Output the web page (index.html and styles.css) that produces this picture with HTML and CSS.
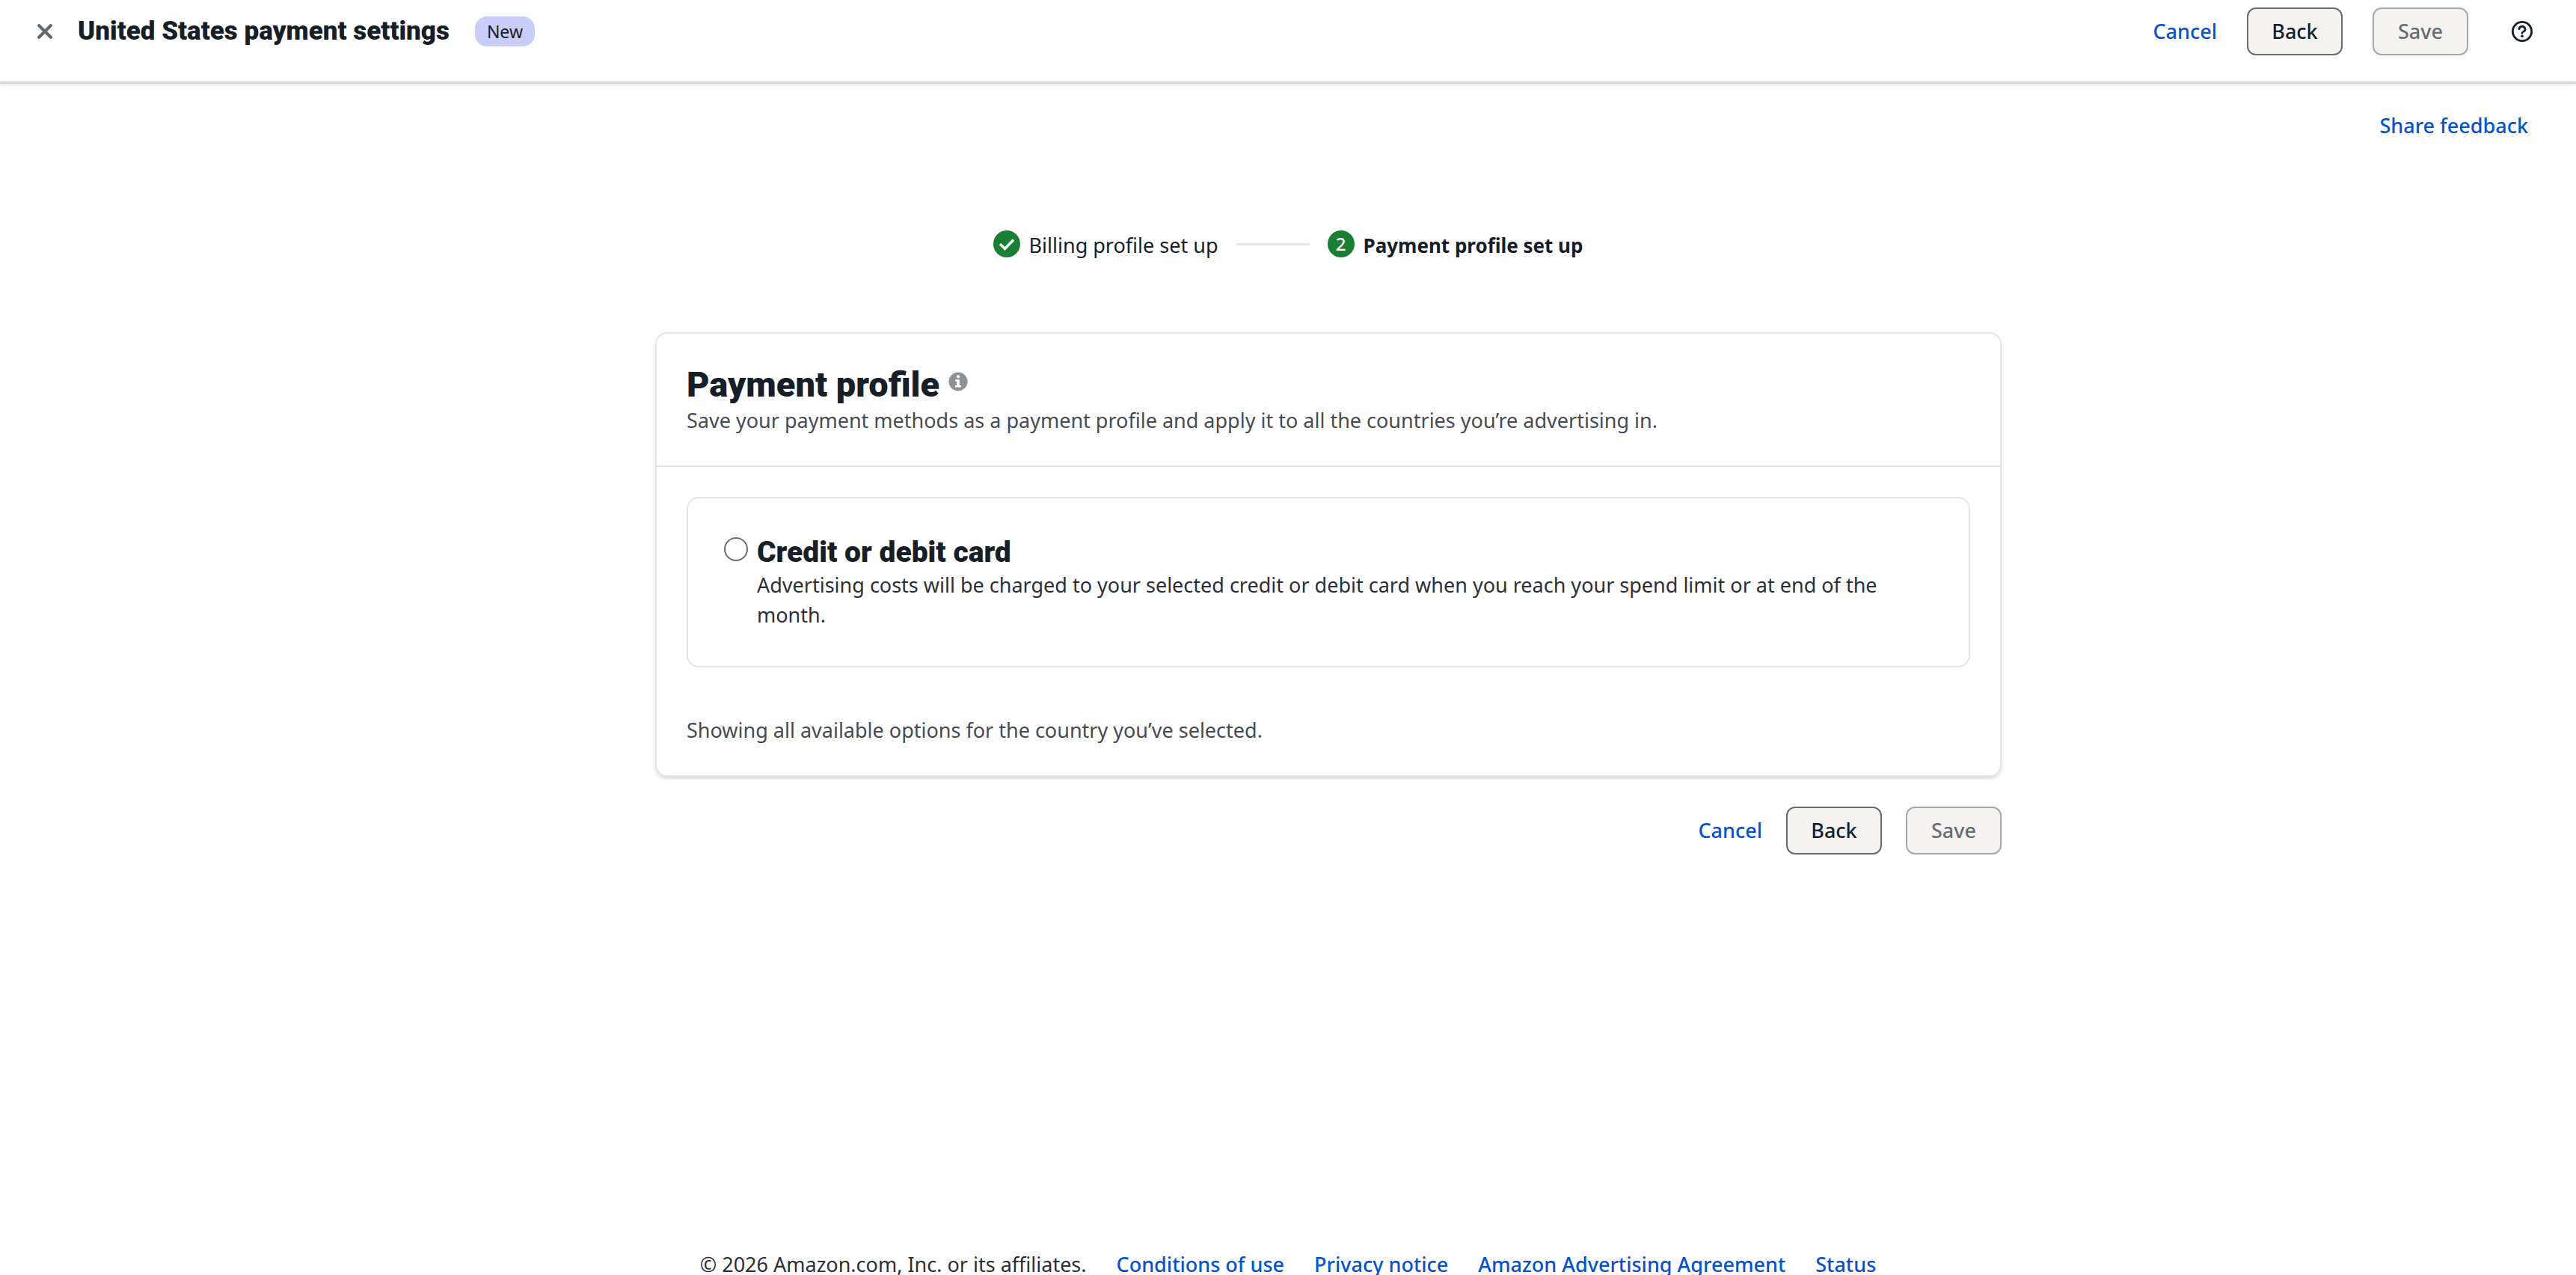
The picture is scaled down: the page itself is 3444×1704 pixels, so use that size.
FILE: index.html
```html
<!DOCTYPE html>
<html lang="en">
<head>
<meta charset="utf-8">
<meta name="viewport" content="width=device-width, initial-scale=1">
<title>United States payment settings</title>
<link rel="stylesheet" href="styles.css">
</head>
<body>
<header class="topbar">
  <button class="icon-button close" type="button" aria-label="Close">
    <svg width="20" height="20" viewBox="0 0 20 20" fill="none" stroke="currentColor" stroke-width="4.200" stroke-linecap="round"><path d="M2.200 2.200l15.600 15.600M17.800 2.200l-15.600 15.600"/></svg>
  </button>
  <h1 class="topbar-title">United States payment settings</h1>
  <span class="badge">New</span>
  <div class="actions topbar-actions">
    <a class="link" href="#">Cancel</a>
    <button class="button" type="button">Back</button>
    <button class="button" type="button" disabled>Save</button>
  </div>
  <button class="icon-button help" type="button" aria-label="Help">
    <svg width="28" height="28" viewBox="0 0 28 28" fill="none" stroke="currentColor"><circle cx="14" cy="14" r="12.600" stroke-width="2.800"/><path d="M10 11a4 3.600 0 1 1 6 3.100c-1.200.7-2 1.200-2 2.200" stroke-width="2.700" stroke-linecap="round"/><circle cx="14" cy="20.300" r="1.800" fill="currentColor" stroke="none"/></svg>
  </button>
</header>

<div class="feedback"><a class="link" href="#">Share feedback</a></div>

<ol class="steps">
  <li class="step">
    <span class="step-mark"><svg width="36" height="36" viewBox="0 0 36 36" fill="none" stroke="currentColor" stroke-width="3.500"><path d="M9 18l6.500 6.500L27 12.500"/></svg></span>
    <span class="step-name">Billing profile set up</span>
  </li>
  <li class="step-line" aria-hidden="true"></li>
  <li class="step current" aria-current="step">
    <span class="step-mark">2</span>
    <span class="step-name">Payment profile set up</span>
  </li>
</ol>

<main class="content">
  <section class="card">
    <div class="card-header">
      <div class="card-heading">
        <h2 class="card-title">Payment profile</h2>
        <button class="icon-button info" type="button" aria-label="About payment profiles">
          <svg width="26" height="26" viewBox="0 0 26 26"><circle cx="13" cy="13" r="12.500" fill="#8f9295"/><path d="M9.300 10.300h5.500v7.700h2.200v2.400H9V18h2.300v-5.300h-2z" fill="#fff"/><circle cx="13" cy="6.300" r="2.100" fill="#fff"/></svg>
        </button>
      </div>
      <p class="muted">Save your payment methods as a payment profile and apply it to all the countries you’re advertising in.</p>
    </div>
    <div class="card-body">
      <div class="option">
        <input class="radio" type="radio" name="method" id="card-method" aria-describedby="card-note">
        <div class="option-text">
          <label class="option-title" for="card-method">Credit or debit card</label>
          <p id="card-note">Advertising costs will be charged to your selected credit or debit card when you reach your spend limit or at end of the month.</p>
        </div>
      </div>
      <p class="muted">Showing all available options for the country you’ve selected.</p>
    </div>
  </section>
  <div class="actions">
    <a class="link" href="#">Cancel</a>
    <button class="button" type="button">Back</button>
    <button class="button" type="button" disabled>Save</button>
  </div>
</main>

<footer class="footer">
  <span>© 2026 Amazon.com, Inc. or its affiliates.</span>
  <a class="link" href="#">Conditions of use</a>
  <a class="link" href="#">Privacy notice</a>
  <a class="link" href="#">Amazon Advertising Agreement</a>
  <a class="link" href="#">Status</a>
</footer>
</body>
</html>
```
FILE: styles.css
```css
:root {
  --ink: #161e28;
  --text: #2a2f38;
  --muted: #464b53;
  --link: #0553cc;
  --line: #e6e6e6;
  --green: #1a7f32;
  --heading: Roboto, "Liberation Sans", sans-serif;
}

* { box-sizing: border-box; }

body {
  margin: 0;
  background: #fff;
  color: var(--text);
  font: 400 27px/40px "Noto Sans", "Open Sans", sans-serif;
}

h1, h2, p, ol { margin: 0; padding: 0; }

.link {
  color: var(--link);
  font-weight: 500;
  text-decoration: none;
}
.link:hover { text-decoration: underline; }

.icon-button {
  display: flex;
  padding: 0;
  border: 0;
  background: none;
  cursor: pointer;
}

.topbar {
  display: flex;
  align-items: center;
  height: 108px;
  padding: 0 58px 24px 50px;
  box-shadow: 0 2px 0 #e1e3df, 0 4px 0 #d6d8d3, 0 6px 4px #eeece8;
}
.close { color: #646a70; }
.topbar-title {
  margin-left: 34px;
  color: var(--ink);
  font: 900 35px/40px var(--heading);
}
.badge {
  margin-left: 34px;
  padding: 0 16px;
  border-radius: 16px;
  background: #c9cdfa;
  color: var(--ink);
  font-size: 23px;
}
.topbar-actions { margin-left: auto; }
.help { margin-left: 58px; color: var(--ink); }

.actions {
  display: flex;
  align-items: center;
  justify-content: flex-end;
}
.button {
  width: 128px;
  height: 64px;
  margin-left: 32px;
  border: 2px solid #676d73;
  border-radius: 12px;
  background: #f4f3ef;
  color: var(--ink);
  font: inherit;
  font-weight: 500;
  cursor: pointer;
}
.topbar-actions .button { margin-left: 40px; }
.button:disabled {
  border-color: #a6a8aa;
  color: #676d73;
  cursor: default;
}

.feedback {
  padding: 40px 64px 0;
  text-align: right;
}

.steps {
  display: flex;
  align-items: center;
  justify-content: center;
  margin-top: 116px;
  list-style: none;
}
.step {
  display: flex;
  align-items: center;
  gap: 12px;
  color: var(--ink);
}
.step-name { padding-top: 4px; }
.step.current { font-size: 26px; font-weight: 700; }
.step-mark {
  display: flex;
  align-items: center;
  justify-content: center;
  width: 36px;
  height: 36px;
  border-radius: 50%;
  background: var(--green);
  color: #fff;
  font-size: 24px;
  font-weight: 500;
}
.step-line {
  width: 98px;
  height: 3px;
  margin: 0 24px;
  background: var(--line);
}

.content {
  max-width: 1908px;
  min-height: 1226px;
  margin: 96px auto 0;
  padding-left: 108px;
}
.card {
  margin-bottom: 40px;
  border: 2px solid var(--line);
  border-radius: 16px;
  box-shadow: 0 3px 4px #dddbd8;
}
.card-header {
  padding: 40px;
  border-bottom: 2px solid var(--line);
}
.card-heading {
  display: flex;
  align-items: center;
  gap: 12px;
}
.card-title {
  color: var(--ink);
  font: 900 47px/56px var(--heading);
}
.info { margin-bottom: 8px; }
.muted { color: var(--muted); }
.card-body { padding: 40px; }
.option {
  display: flex;
  align-items: flex-start;
  gap: 12px;
  margin-bottom: 64px;
  padding: 48px;
  border: 2px solid var(--line);
  border-radius: 16px;
}
.radio {
  flex: none;
  appearance: none;
  width: 32px;
  height: 32px;
  margin: 4px 0 0;
  border: 2px solid #676d73;
  border-radius: 50%;
  background: #fff;
}
.radio:checked { border: 10px solid var(--link); }
.option-title {
  display: block;
  color: var(--ink);
  font: 900 39px/48px var(--heading);
}

.footer {
  display: flex;
  justify-content: center;
  gap: 40px;
  padding-bottom: 40px;
}
```
